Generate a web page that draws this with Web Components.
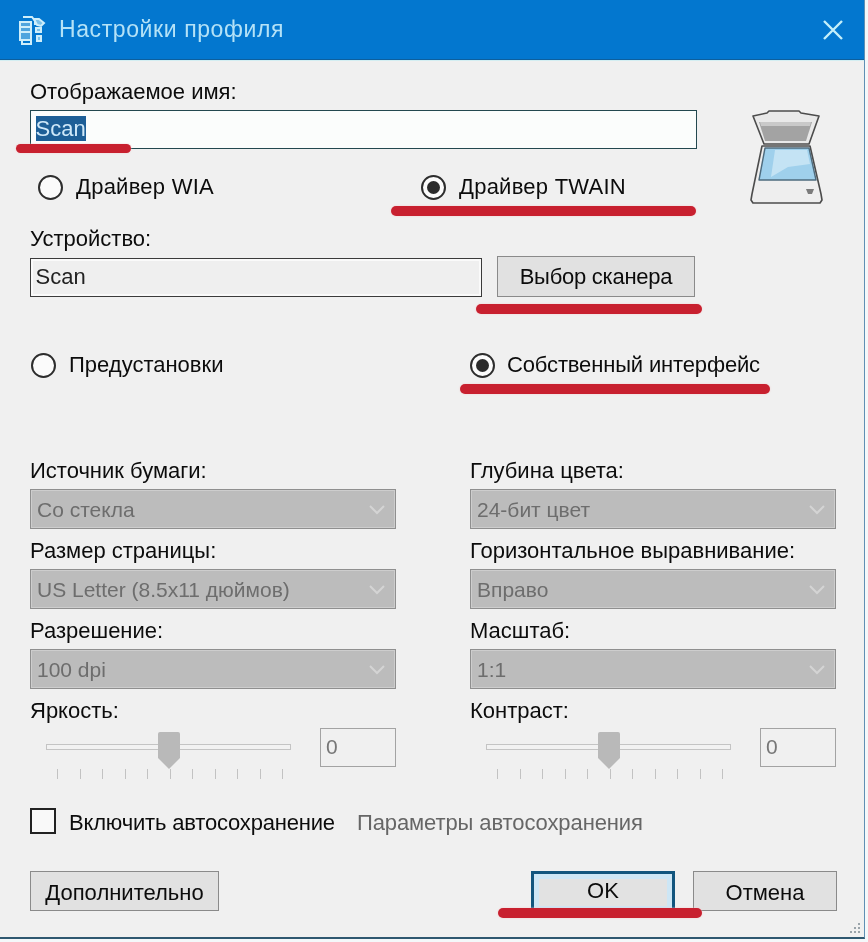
<!DOCTYPE html>
<html lang="ru">

<head>
    <meta charset="UTF-8">
    <title>Настройки профиля</title>
    <style>
        html, body { margin: 0; background: #f4f8fa; }
        body { font: 22px "Liberation Sans", Arial, sans-serif; color: #0c0c0c; }
    </style>
</head>

<body>
    <profile-dialog>
        <title-bar slot="title">Настройки профиля</title-bar>

        <!-- top block with the scanner picture on the right -->
        <section-row slot="top">
            <field-label>Отображаемое имя:</field-label>
            <win-input selected value="Scan"></win-input>
            <radio-row offset="8" second="383" style="margin-top:24px">
                <win-radio style="letter-spacing:.25px">Драйвер WIA</win-radio>
                <win-radio checked style="letter-spacing:.25px">Драйвер TWAIN</win-radio>
            </radio-row>
        </section-row>
        <scanner-icon slot="icon"></scanner-icon>

        <div slot="device">
            <field-label>Устройство:</field-label>
        </div>
        <win-input slot="device-input" value="Scan"></win-input>
        <win-button slot="device-button" tall style="letter-spacing:-.25px">Выбор сканера</win-button>

        <radio-row slot="mode" offset="1" second="439">
            <win-radio>Предустановки</win-radio>
            <win-radio checked style="--gap:12px;letter-spacing:-.15px">Собственный интерфейс</win-radio>
        </radio-row>

        <win-select slot="grid" label="Источник бумаги:" value="Со стекла"></win-select>
        <win-select slot="grid" label="Глубина цвета:" value="24-бит цвет"></win-select>
        <win-select slot="grid" label="Размер страницы:" value="US Letter (8.5x11 дюймов)"></win-select>
        <win-select slot="grid" label="Горизонтальное выравнивание:" value="Вправо"></win-select>
        <win-select slot="grid" label="Разрешение:" value="100 dpi"></win-select>
        <win-select slot="grid" label="Масштаб:" value="1:1"></win-select>
        <win-slider slot="grid" label="Яркость:" value="0"></win-slider>
        <win-slider slot="grid" label="Контраст:" value="0"></win-slider>

        <win-check slot="save" style="letter-spacing:-.18px">Включить автосохранение</win-check>
        <span slot="save" style="color:#666;margin-left:22px;padding-top:3px;letter-spacing:-.1px">Параметры автосохранения</span>

        <win-button slot="extra" style="width:189px">Дополнительно</win-button>
        <win-button slot="actions" primary style="width:144px">OK</win-button>
        <win-button slot="actions" style="width:144px">Отмена</win-button>

        <!-- красные пометки поверх окна -->
        <red-mark slot="marks" x="16" y="144" w="115" h="9"></red-mark>
        <red-mark slot="marks" x="391" y="206" w="305" h="10"></red-mark>
        <red-mark slot="marks" x="476" y="304" w="226" h="10"></red-mark>
        <red-mark slot="marks" x="460" y="384" w="310" h="10"></red-mark>
        <red-mark slot="marks" x="498" y="908" w="204" h="10"></red-mark>
    </profile-dialog>

    <script>
        // helper: class with a shadow root filled from a html string
        class Base extends HTMLElement {
            constructor(html) {
                super();
                const root = this.attachShadow({ mode: 'open' });
                const template = document.createElement('template');
                template.innerHTML = html;
                root.appendChild(template.content.cloneNode(true));
            }
        }

        class ProfileDialog extends Base {
            constructor() {
                super(`
                    <style>
                        :host {
                            display: block; position: relative; box-sizing: border-box;
                            width: 865px; height: 939px;
                            background: #f0f0f0;
                            border-right: 1px solid #5f8fb4;
                            border-bottom: 2px solid #2f5870;
                            filter: blur(.35px);
                        }
                        .body { padding: 0 0 0 30px; }
                        .top { display: flex; margin-top: 18px; }
                        .icon { margin: 30px 0 0 51px; }
                        .device { margin-top: 19px; height: 31px; }
                        .device-row { display: flex; align-items: flex-end; gap: 15px; }
                        .mode { margin-top: 54px; }
                        .grid {
                            display: grid; grid-template-columns: 366px 366px;
                            column-gap: 74px; row-gap: 8px; margin-top: 78px;
                        }
                        .save { display: flex; align-items: center; margin-top: 25px; height: 28px; }
                        .bottom { display: flex; justify-content: space-between; margin: 36px 27px 0 0; }
                        .actions { display: flex; gap: 18px; }
                        .grip { position: absolute; right: 2px; bottom: 2px; }
                    </style>
                    <slot name="title"></slot>
                    <div class="body">
                        <div class="top"><slot name="top"></slot><div class="icon"><slot name="icon"></slot></div></div>
                        <div class="device"><slot name="device"></slot></div>
                        <div class="device-row"><slot name="device-input"></slot><slot name="device-button"></slot></div>
                        <div class="mode"><slot name="mode"></slot></div>
                        <div class="grid"><slot name="grid"></slot></div>
                        <div class="save"><slot name="save"></slot></div>
                        <div class="bottom"><slot name="extra"></slot><div class="actions"><slot name="actions"></slot></div></div>
                    </div>
                    <svg class="grip" width="14" height="14" fill="#9aa4aa">
                        <rect x="10" y="2" width="2" height="2"/><rect x="6" y="6" width="2" height="2"/><rect x="10" y="6" width="2" height="2"/>
                        <rect x="2" y="10" width="2" height="2"/><rect x="6" y="10" width="2" height="2"/><rect x="10" y="10" width="2" height="2"/>
                    </svg>
                    <slot name="marks"></slot>
                `);
            }
        }

        class TitleBar extends Base {
            constructor() {
                super(`
                    <style>
                        :host {
                            display: flex; align-items: center; height: 60px; box-sizing: border-box;
                            background: #0377cf; border-bottom: 1px solid #0d5f9d; box-shadow: 0 1px 0 #d3eef2;
                            color: #b4e2f7; padding: 0 20px 0 17px; font-size: 23px;
                        }
                        .text { margin-left: 12px; flex: 1; letter-spacing: .6px; }
                        svg { display: block; }
                    </style>
                    <svg width="30" height="32" viewBox="0 0 30 32" fill="none" stroke="#cfeefa" stroke-width="2">
                        <path d="M3 8h11v18H3z" fill="#4fa5de"/>
                        <path d="M6 3h9l3 4v4M4 13h9M4 18h9M5 26v4h9v-4"/>
                        <path d="M17 5h5l5 4-3 3-4-1zM19 14h5v4h-5zM20 22h4v5h-4z" fill="#7cc2ea"/>
                    </svg>
                    <span class="text"><slot></slot></span>
                    <svg width="22" height="20" viewBox="0 0 22 20" stroke="#c4effa" stroke-width="2.4">
                        <path d="M2 1l18 18M20 1L2 19"/>
                    </svg>
                `);
            }
        }

        class SectionRow extends Base {
            constructor() {
                super(`<style>:host { display: block; width: 667px; }</style><slot></slot>`);
            }
        }

        class FieldLabel extends Base {
            constructor() {
                super(`<style>:host { display: block; height: 28px; line-height: 28px; margin-bottom: 4px; white-space: nowrap; }</style><slot></slot>`);
            }
        }

        class WinInput extends Base {
            constructor() {
                super(`
                    <style>
                        :host {
                            display: block; box-sizing: border-box; flex: none; height: 39px;
                            border: 1.5px solid #2e4347; background: #fbfdfc;
                            padding: 5px 4.5px; line-height: 25px; color: #222;
                        }
                        :host([selected]) { border-color: #23484f; }
                        :host(:not([selected])) { width: 452px; border-color: #3b3b3b; background: #efefef; box-shadow: inset 0 0 0 2px #fafafa; }
                        .sel { background: #1d5f97; color: #cfe9f9; display: inline-block; line-height: 25px; }
                    </style>
                    <span id="v"></span>
                `);
            }
            connectedCallback() {
                const v = this.shadowRoot.getElementById('v');
                v.textContent = this.getAttribute('value');
                if (this.hasAttribute('selected')) v.className = 'sel';
            }
        }

        class RadioRow extends Base {
            constructor() {
                super(`
                    <style>
                        :host { display: grid; height: 28px; align-items: center; }
                    </style>
                    <slot></slot>
                `);
            }
            connectedCallback() {
                this.style.paddingLeft = this.getAttribute('offset') + 'px';
                this.style.gridTemplateColumns = this.getAttribute('second') + 'px 1fr';
            }
        }

        class WinRadio extends Base {
            constructor() {
                super(`
                    <style>
                        :host { display: flex; align-items: center; gap: var(--gap, 13px); white-space: nowrap; }
                        .c {
                            box-sizing: border-box; width: 25px; height: 25px; border-radius: 50%; flex: none;
                            border: 2px solid #2d2d2d; background: #fbfbfb; display: grid; place-items: center;
                        }
                        .d { display: none; width: 13px; height: 13px; border-radius: 50%; background: #2b2b2b; }
                        :host([checked]) .d { display: block; }
                    </style>
                    <span class="c"><span class="d"></span></span>
                    <span><slot></slot></span>
                `);
            }
        }

        class WinButton extends Base {
            constructor() {
                super(`
                    <style>
                        :host {
                            display: flex; align-items: center; justify-content: center; box-sizing: border-box;
                            height: 40px; padding-top: 3px; border: 1.5px solid #8a8a8a; background: #e1e1e1;
                            white-space: nowrap; flex: none;
                        }
                        :host([tall]) { width: 198px; height: 41px; padding-top: 0; }
                        :host([primary]) {
                            border: 3px solid #12557e; border-bottom: 0; padding: 0 0 4px;
                            background: #e2e2e2; box-shadow: inset 0 0 0 5px #cde6f5;
                        }
                    </style>
                    <slot></slot>
                `);
            }
        }

        class WinSelect extends Base {
            constructor() {
                super(`
                    <style>
                        :host { display: block; }
                        .l { height: 28px; line-height: 28px; margin-bottom: 4px; white-space: nowrap; }
                        .b {
                            display: flex; align-items: center; justify-content: space-between; box-sizing: border-box;
                            height: 40px; padding: 2px 10px 0 6px;
                            background: #bcbcbc; border: 1.5px solid #8f8f8f; box-shadow: inset 0 0 0 1px #cdcdcd;
                            color: #6d6d6d; font-size: 21px; white-space: nowrap;
                        }
                    </style>
                    <div class="l" id="l"></div>
                    <div class="b"><span id="v"></span>
                        <svg width="16" height="10" viewBox="0 0 16 10" fill="none" stroke="#d4d4d4" stroke-width="2"><path d="M1 1l7 7 7-7"/></svg>
                    </div>
                `);
            }
            connectedCallback() {
                this.shadowRoot.getElementById('l').textContent = this.getAttribute('label');
                this.shadowRoot.getElementById('v').textContent = this.getAttribute('value');
            }
        }

        class WinSlider extends Base {
            constructor() {
                super(`
                    <style>
                        :host { display: block; }
                        .l { height: 28px; line-height: 28px; margin-bottom: 3px; white-space: nowrap; }
                        .row { display: flex; justify-content: space-between; padding-left: 16px; }
                        .s { position: relative; width: 245px; height: 54px; }
                        .track {
                            margin-top: 16px; height: 6px; box-sizing: border-box;
                            background: #f2f2f2; border: 1px solid #c4c4c4;
                        }
                        .thumb { position: absolute; left: 112px; top: 4px; }
                        .ticks { display: flex; justify-content: space-between; margin: 19px 8px 0 11px; }
                        .ticks i { width: 1px; height: 10px; background: #c2c2c2; }
                        .n {
                            box-sizing: border-box; width: 76px; height: 39px; padding: 0 5px;
                            border: 1.5px solid #a3a3a3; line-height: 36px; color: #777; font-size: 21px; background: #f0f0f0;
                        }
                    </style>
                    <div class="l" id="l"></div>
                    <div class="row">
                        <div class="s">
                            <div class="track"></div>
                            <svg class="thumb" width="22" height="37" viewBox="0 0 22 37"><path d="M2 0h18a2 2 0 0 1 2 2v24l-11 11L0 26V2a2 2 0 0 1 2-2z" fill="#b9b9b9"/></svg>
                            <div class="ticks" id="t"></div>
                        </div>
                        <div class="n" id="n"></div>
                    </div>
                `);
            }
            connectedCallback() {
                this.shadowRoot.getElementById('l').textContent = this.getAttribute('label');
                this.shadowRoot.getElementById('n').textContent = this.getAttribute('value');
                this.shadowRoot.getElementById('t').innerHTML = '<i></i>'.repeat(11);
            }
        }

        class WinCheck extends Base {
            constructor() {
                super(`
                    <style>
                        :host { display: flex; align-items: center; gap: 13px; white-space: nowrap; }
                        .b { box-sizing: border-box; width: 26px; height: 26px; border: 2px solid #222; background: #f9f9f9; }
                        .t { padding-top: 3px; }
                    </style>
                    <span class="b"></span><span class="t"><slot></slot></span>
                `);
            }
        }

        class ScannerIcon extends Base {
            constructor() {
                super(`
                    <style>:host { display: block; width: 76px; height: 98px; } svg { display: block; }</style>
                    <svg width="76" height="98" viewBox="748 108 76 98" stroke-linejoin="round">
                        <path d="M753 116l14-3 2-2h30l2 2 18 3-10 28h-45z" fill="#e9e9e9" stroke="#4c4c4c" stroke-width="1.6"/>
                        <path d="M759 122h53l-6 19h-41z" fill="#a3a3a3"/>
                        <path d="M760 122h51l-1 4h-49z" fill="#c9c9c9"/>
                        <path d="M762 146h48l11 48 1 6-2 3h-67l-2-3 1-6z" fill="#eeeeee" stroke="#4c4c4c" stroke-width="1.6"/>
                        <path d="M765 148h44l7 32h-57z" fill="#9fd0ec" stroke="#4d6b7e" stroke-width="1.4"/>
                        <path d="M775 150h32l3 14-22 3-17 10z" fill="#c4e3f4"/>
                        <path d="M806 189h8l-2 5h-4z" fill="#7b7b7b"/>
                    </svg>
                `);
            }
        }

        // красная линия от руки
        class RedMark extends Base {
            constructor() {
                super(`<style>:host { display: block; position: absolute; background: #c8202f; border-radius: 5px; box-shadow: 0 0 2px #f3c9cb; }</style>`);
            }
            connectedCallback() {
                this.style.left = this.getAttribute('x') + 'px';
                this.style.top = this.getAttribute('y') + 'px';
                this.style.width = this.getAttribute('w') + 'px';
                this.style.height = this.getAttribute('h') + 'px';
            }
        }

        customElements.define('profile-dialog', ProfileDialog);
        customElements.define('title-bar', TitleBar);
        customElements.define('section-row', SectionRow);
        customElements.define('field-label', FieldLabel);
        customElements.define('win-input', WinInput);
        customElements.define('radio-row', RadioRow);
        customElements.define('win-radio', WinRadio);
        customElements.define('win-button', WinButton);
        customElements.define('win-select', WinSelect);
        customElements.define('win-slider', WinSlider);
        customElements.define('win-check', WinCheck);
        customElements.define('scanner-icon', ScannerIcon);
        customElements.define('red-mark', RedMark);
    </script>
</body>

</html>
